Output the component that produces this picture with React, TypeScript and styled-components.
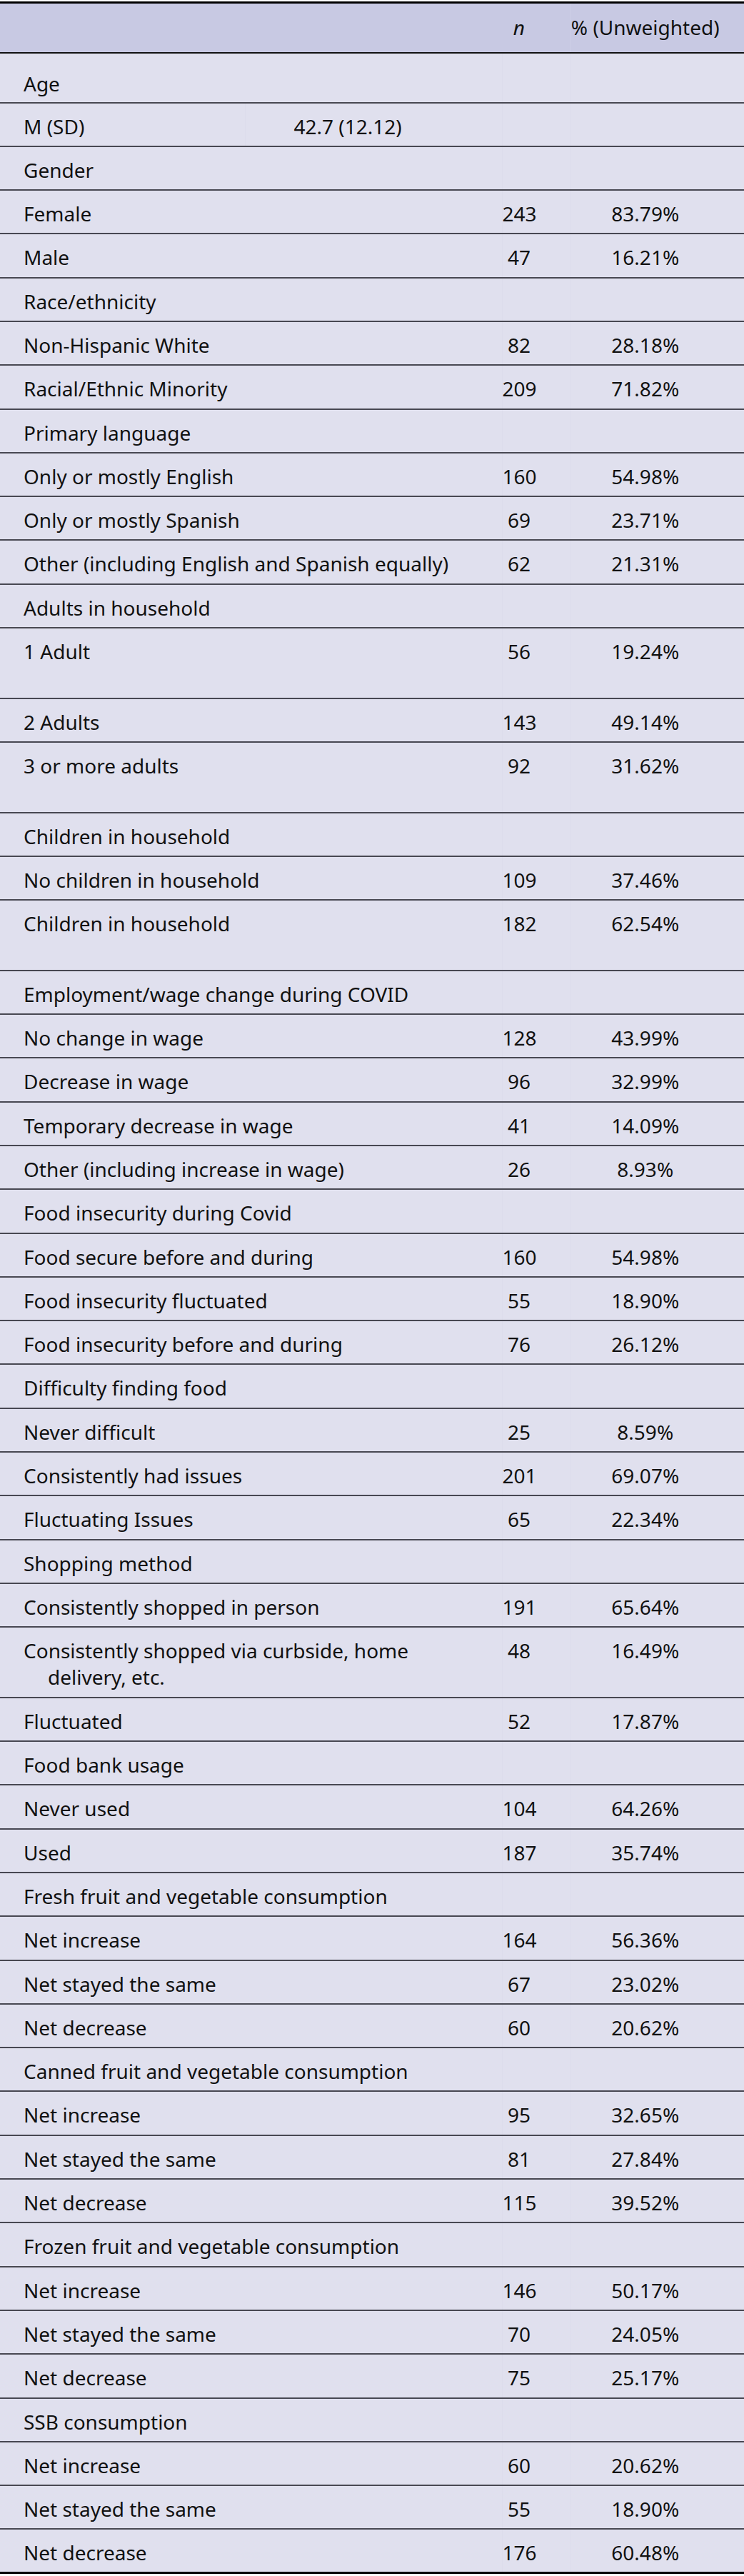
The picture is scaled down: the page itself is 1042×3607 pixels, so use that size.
import styled, { createGlobalStyle } from 'styled-components'

type Row = {
    label: string
    value?: string
    n?: string
    pct?: string
    tall?: boolean
    wrap?: string
}

const rows: Row[] = [
    { label: 'M (SD)', value: '42.7 (12.12)' },
    { label: 'Gender' },
    { label: 'Female', n: '243', pct: '83.79%' },
    { label: 'Male', n: '47', pct: '16.21%' },
    { label: 'Race/ethnicity' },
    { label: 'Non-Hispanic White', n: '82', pct: '28.18%' },
    { label: 'Racial/Ethnic Minority', n: '209', pct: '71.82%' },
    { label: 'Primary language' },
    { label: 'Only or mostly English', n: '160', pct: '54.98%' },
    { label: 'Only or mostly Spanish', n: '69', pct: '23.71%' },
    { label: 'Other (including English and Spanish equally)', n: '62', pct: '21.31%' },
    { label: 'Adults in household' },
    { label: '1 Adult', n: '56', pct: '19.24%', tall: true },
    { label: '2 Adults', n: '143', pct: '49.14%' },
    { label: '3 or more adults', n: '92', pct: '31.62%', tall: true },
    { label: 'Children in household' },
    { label: 'No children in household', n: '109', pct: '37.46%' },
    { label: 'Children in household', n: '182', pct: '62.54%', tall: true },
    { label: 'Employment/wage change during COVID' },
    { label: 'No change in wage', n: '128', pct: '43.99%' },
    { label: 'Decrease in wage', n: '96', pct: '32.99%' },
    { label: 'Temporary decrease in wage', n: '41', pct: '14.09%' },
    { label: 'Other (including increase in wage)', n: '26', pct: '8.93%' },
    { label: 'Food insecurity during Covid' },
    { label: 'Food secure before and during', n: '160', pct: '54.98%' },
    { label: 'Food insecurity fluctuated', n: '55', pct: '18.90%' },
    { label: 'Food insecurity before and during', n: '76', pct: '26.12%' },
    { label: 'Difficulty finding food' },
    { label: 'Never difficult', n: '25', pct: '8.59%' },
    { label: 'Consistently had issues', n: '201', pct: '69.07%' },
    { label: 'Fluctuating Issues', n: '65', pct: '22.34%' },
    { label: 'Shopping method' },
    { label: 'Consistently shopped in person', n: '191', pct: '65.64%' },
    {
        label: 'Consistently shopped via curbside, home',
        wrap: 'delivery, etc.',
        n: '48',
        pct: '16.49%',
        tall: true,
    },
    { label: 'Fluctuated', n: '52', pct: '17.87%' },
    { label: 'Food bank usage' },
    { label: 'Never used', n: '104', pct: '64.26%' },
    { label: 'Used', n: '187', pct: '35.74%' },
    { label: 'Fresh fruit and vegetable consumption' },
    { label: 'Net increase', n: '164', pct: '56.36%' },
    { label: 'Net stayed the same', n: '67', pct: '23.02%' },
    { label: 'Net decrease', n: '60', pct: '20.62%' },
    { label: 'Canned fruit and vegetable consumption' },
    { label: 'Net increase', n: '95', pct: '32.65%' },
    { label: 'Net stayed the same', n: '81', pct: '27.84%' },
    { label: 'Net decrease', n: '115', pct: '39.52%' },
    { label: 'Frozen fruit and vegetable consumption' },
    { label: 'Net increase', n: '146', pct: '50.17%' },
    { label: 'Net stayed the same', n: '70', pct: '24.05%' },
    { label: 'Net decrease', n: '75', pct: '25.17%' },
    { label: 'SSB consumption' },
    { label: 'Net increase', n: '60', pct: '20.62%' },
    { label: 'Net stayed the same', n: '55', pct: '18.90%' },
    { label: 'Net decrease', n: '176', pct: '60.48%' },
]

export default function App() {
    return (
        <>
            <GlobalStyle />
            <Page>
                <Table>
                    <colgroup>
                        <col style={{ width: 343 }} />
                        <col style={{ width: 360 }} />
                        <col style={{ width: 96 }} />
                        <col style={{ width: 243 }} />
                    </colgroup>
                    <thead>
                        <HeadRow>
                            <HeadCell />
                            <HeadCell />
                            <HeadCell $num>
                                <em>n</em>
                            </HeadCell>
                            <HeadCell $pct>% (Unweighted)</HeadCell>
                        </HeadRow>
                    </thead>
                    <tbody>
                        <BodyRow $height={70}>
                            <LabelCell $top={24} colSpan={2}>
                                Age
                            </LabelCell>
                            <NumCell />
                            <PctCell />
                        </BodyRow>
                        {rows.map((row, i) => (
                            <BodyRow key={i} $height={row.tall ? 98.6 : 61.3}>
                                {row.value ? (
                                    <>
                                        <LabelCell>{row.label}</LabelCell>
                                        <ValueCell>{row.value}</ValueCell>
                                    </>
                                ) : (
                                    <LabelCell colSpan={2} $hang={!!row.wrap}>
                                        {row.label}
                                        {row.wrap && (
                                            <>
                                                <br />
                                                {row.wrap}
                                            </>
                                        )}
                                    </LabelCell>
                                )}
                                <NumCell>{row.n}</NumCell>
                                <PctCell>{row.pct}</PctCell>
                            </BodyRow>
                        ))}
                    </tbody>
                </Table>
            </Page>
        </>
    )
}

const GlobalStyle = createGlobalStyle`
    html, body {
        margin: 0;
        padding: 0;
        background: #ffffff;
    }
`

const Page = styled.div`
    width: 1042px;
    padding-top: 2px;
    font-family: 'Noto Sans', 'Open Sans', sans-serif;
    color: #111;
`

const Table = styled.table`
    width: 1042px;
    table-layout: fixed;
    border-collapse: collapse;
    border-top: 3px solid #000;
    border-bottom: 3px solid #000;
    background: #e0e0ee;
    font-size: 28px;
`

const HeadRow = styled.tr`
    height: 70px;
    background: #c8c9e3;
    border-bottom: 2px solid #111;
`

const HeadCell = styled.th<{ $num?: boolean; $pct?: boolean }>`
    padding: 15px 0 0;
    vertical-align: top;
    font-weight: normal;
    line-height: 37px;
    text-align: center;
    padding-right: ${(p) => (p.$num ? '48px' : p.$pct ? '34px' : '0')};
    border-left: ${(p) => (p.$pct ? '1px solid #cdcee7' : 'none')};

    em {
        font-style: italic;
    }
`

const BodyRow = styled.tr<{ $height: number }>`
    height: ${(p) => p.$height}px;
    border-bottom: 2px solid #484852;

    &:last-child {
        border-bottom: none;
    }
`

const Cell = styled.td`
    padding: 14px 0 0;
    vertical-align: top;
    line-height: 37px;
    white-space: nowrap;
`

const LabelCell = styled(Cell)<{ $top?: number; $hang?: boolean }>`
    padding-top: ${(p) => (p.$top ?? 14)}px;
    padding-left: ${(p) => (p.$hang ? 67 : 33)}px;
    text-indent: ${(p) => (p.$hang ? -34 : 0)}px;
`

const ValueCell = styled(Cell)`
    padding-left: 68px;
    border-left: 1px solid #dcdcec;
`

const NumCell = styled(Cell)`
    text-align: center;
    padding-right: 48px;
    border-left: 1px solid #dcdcec;
`

const PctCell = styled(Cell)`
    text-align: center;
    padding-right: 34px;
    border-left: 1px solid #dcdcec;
`
